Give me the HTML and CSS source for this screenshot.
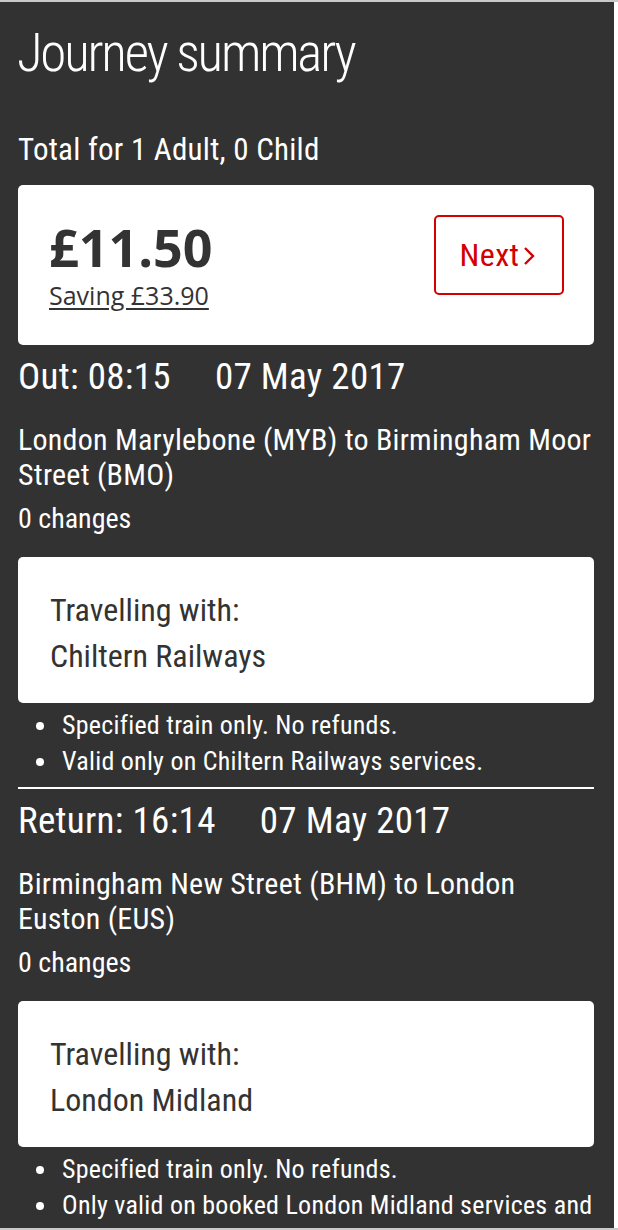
FILE: index.html
```html
<!DOCTYPE html>
<html lang="en">
<head>
<meta charset="utf-8">
<title>Journey summary</title>
<link rel="stylesheet" href="styles.css">
</head>
<body>
<main class="panel">
  <h1 class="title">Journey summary</h1>
  <p class="total-label">Total for 1 Adult, 0 Child</p>

  <section class="card price-card">
    <div class="price-block">
      <div class="price">£11.50</div>
      <a class="saving" href="#">Saving £33.90</a>
    </div>
    <button class="next-btn" type="button">Next<svg class="chev" width="14" height="22" viewBox="0 0 14 22"><polyline points="3,3 11,11 3,19" fill="none" stroke="#d40000" stroke-width="2.4"/></svg></button>
  </section>

  <section class="leg">
    <h2 class="leg-head"><span>Out: 08:15</span><span class="date">07 May 2017</span></h2>
    <p class="route">London Marylebone (MYB) to Birmingham Moor Street (BMO)</p>
    <p class="changes">0 changes</p>
    <div class="card operator-card">
      <p class="op-label">Travelling with:</p>
      <p class="op-name">Chiltern Railways</p>
    </div>
    <ul class="conditions">
      <li>Specified train only. No refunds.</li>
      <li>Valid only on Chiltern Railways services.</li>
    </ul>
  </section>

  <hr class="divider">

  <section class="leg">
    <h2 class="leg-head"><span>Return: 16:14</span><span class="date">07 May 2017</span></h2>
    <p class="route">Birmingham New Street (BHM) to London Euston (EUS)</p>
    <p class="changes">0 changes</p>
    <div class="card operator-card">
      <p class="op-label">Travelling with:</p>
      <p class="op-name">London Midland</p>
    </div>
    <ul class="conditions">
      <li>Specified train only. No refunds.</li>
      <li>Only valid on booked London Midland services and required connecting London Midland services.</li>
    </ul>
  </section>
</main>
<div class="bottom-edge"></div>
</body>
</html>
```
FILE: styles.css
```css
html {
  background: #ffffff;
}
body {
  margin: 0;
  border-top: 2px solid #c9c9c9;
  font-family: "Roboto Condensed", "Open Sans", "Liberation Sans", sans-serif;
  color: #ffffff;
}
.panel {
  width: 614px;
  box-sizing: border-box;
  background: #323232;
  padding: 19px 20px 40px 18px;
}
p, h1, h2, ul {
  margin: 0;
}
.title {
  font-weight: 300;
  font-size: 53px;
  line-height: 64px;
  letter-spacing: -2.2px;
  margin-left: -1px;
}
.total-label {
  margin-top: 47px;
  font-size: 31px;
  line-height: 36px;
  font-weight: 400;
  letter-spacing: 0.25px;
}
.card {
  background: #ffffff;
  border-radius: 5px;
  color: #333333;
}
.price-card {
  margin-top: 17px;
  display: flex;
  justify-content: space-between;
  align-items: flex-start;
  padding: 30px 30px 35px 31px;
}
.price-block {
  display: flex;
  flex-direction: column;
  padding-top: 4px;
}
.price {
  font-family: "Open Sans", "Liberation Sans", sans-serif;
  font-size: 52px;
  line-height: 56px;
  font-weight: 700;
}
.saving {
  margin-top: 5px;
  font-family: "Open Sans", "Liberation Sans", sans-serif;
  font-size: 25px;
  line-height: 30px;
  color: #333333;
  text-decoration: underline;
  text-underline-offset: 3px;
  text-decoration-thickness: 2px;
}
.next-btn {
  width: 130px;
  height: 80px;
  box-sizing: border-box;
  border: 2px solid #d40000;
  border-radius: 5px;
  background: #ffffff;
  color: #d40000;
  font-family: inherit;
  font-size: 32px;
  letter-spacing: 0.4px;
  display: flex;
  align-items: center;
  justify-content: center;
  gap: 3px;
  padding: 0 2px 0 0;
}
.chev {
  display: block;
  margin-top: 2px;
}
.leg-head {
  margin-top: 12px;
  font-size: 37px;
  line-height: 40px;
  font-weight: 400;
  letter-spacing: 0.3px;
  display: flex;
}
.leg-head .date {
  margin-left: 44px;
}
.route {
  margin-top: 25px;
  font-size: 30px;
  line-height: 35px;
  font-weight: 400;
  letter-spacing: 0.25px;
}
.changes {
  margin-top: 11px;
  font-size: 28px;
  line-height: 32px;
  font-weight: 400;
}
.operator-card {
  margin-top: 22px;
  height: 146px;
  box-sizing: border-box;
  padding: 30px 20px 0 32px;
  font-size: 32px;
  line-height: 46px;
}
.conditions {
  margin-top: 4px;
  padding-left: 44px;
  list-style: none;
  font-size: 26px;
  line-height: 36px;
  font-weight: 400;
  letter-spacing: 0.25px;
}
.conditions li::before {
  content: "";
  display: inline-block;
  width: 8px;
  height: 8px;
  border-radius: 50%;
  background: #ffffff;
  margin-left: -26px;
  margin-right: 18px;
  vertical-align: 4px;
}
.divider {
  margin: 8px 0 0 0;
  border: 0;
  height: 2px;
  background: #ffffff;
}
.bottom-edge {
  position: fixed;
  left: 0;
  right: 0;
  bottom: 0;
  height: 2px;
  background: #c9c9c9;
}
```
